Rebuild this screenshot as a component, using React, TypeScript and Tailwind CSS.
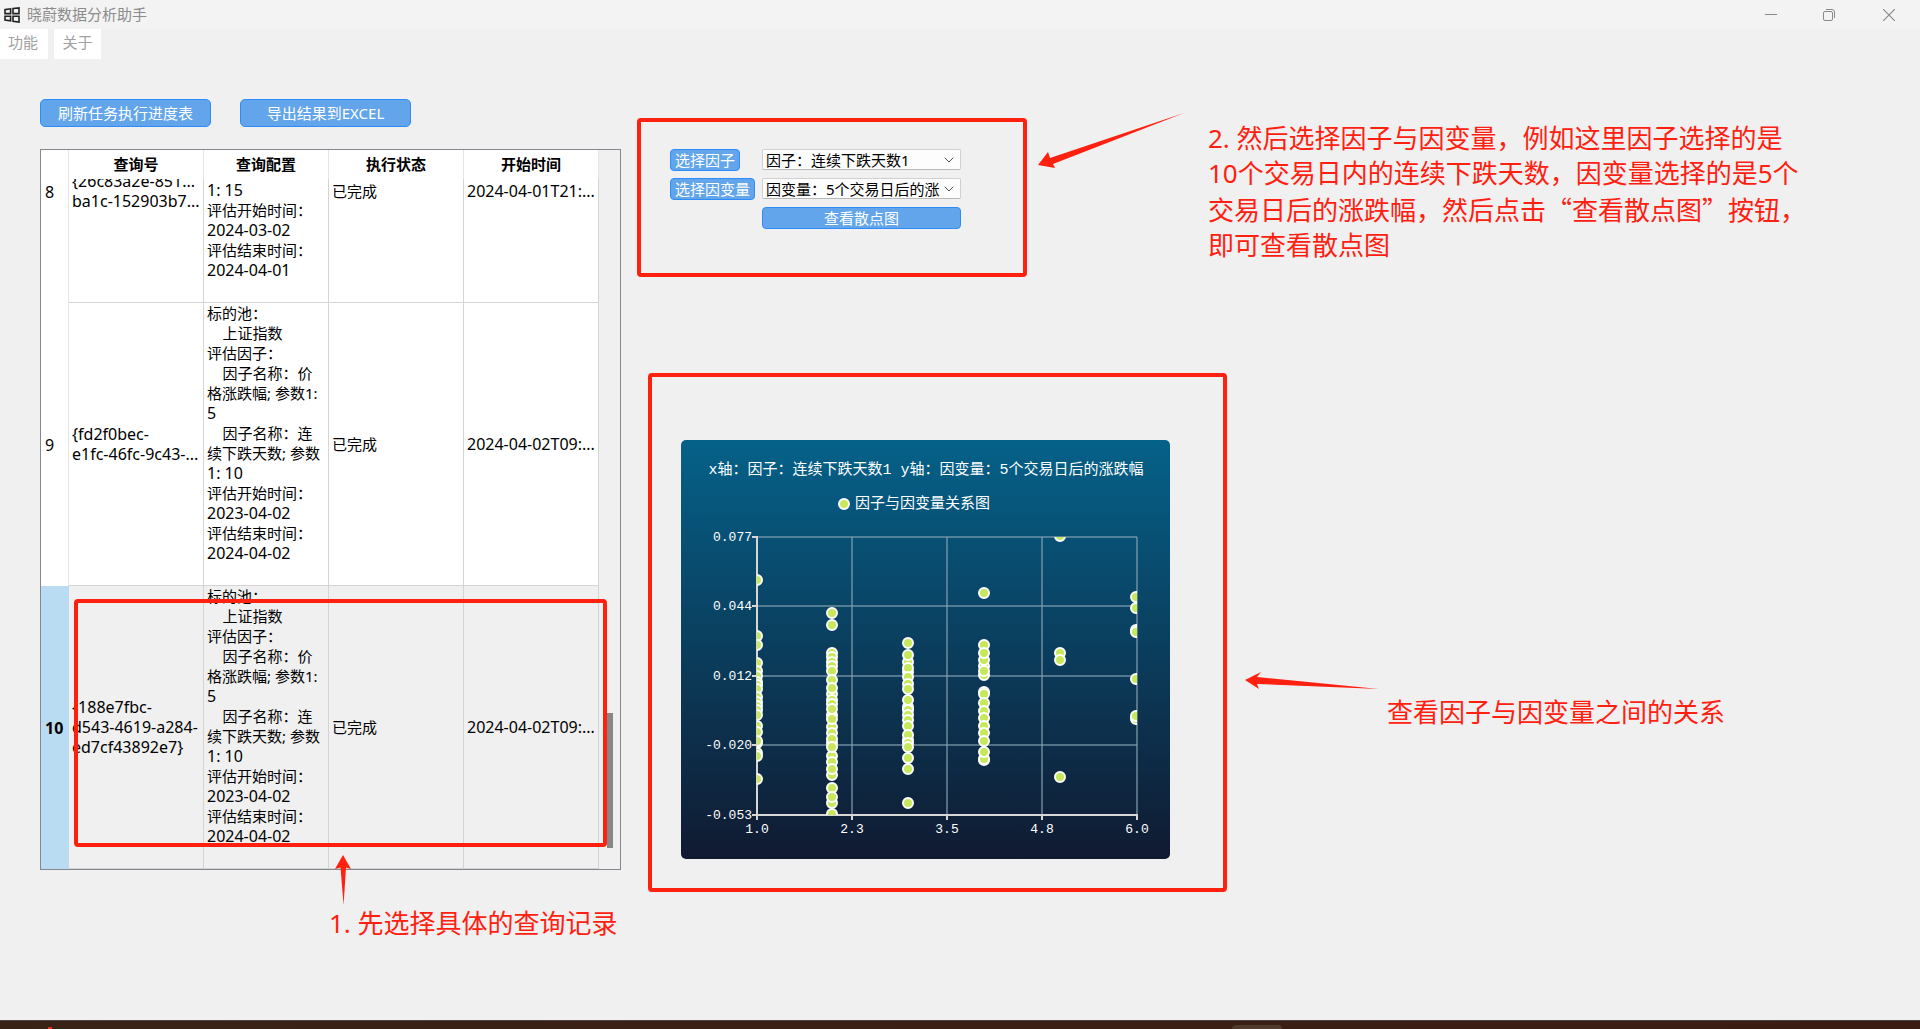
import React from 'react';
import { ChevronDown } from 'lucide-react';

interface QueryRecord {
  row: number;
  id: string[];
  config: string[];
  status: string;
  startTime: string;
}

const factorLines = [
  '标的池：',
  '    上证指数',
  '评估因子：',
  '    因子名称：价',
  '格涨跌幅; 参数1:',
  '5',
  '    因子名称：连',
  '续下跌天数; 参数',
  '1: 10',
  '评估开始时间：',
  '2023-04-02',
  '评估结束时间：',
  '2024-04-02',
  '',
];

const records: QueryRecord[] = [
  {
    row: 8,
    id: ['{26c83a2e-851...', 'ba1c-152903b7...'],
    config: [
      '',
      '',
      '',
      '',
      '',
      '1: 15',
      '评估开始时间：',
      '2024-03-02',
      '评估结束时间：',
      '2024-04-01',
      '',
    ],
    status: '已完成',
    startTime: '2024-04-01T21:...',
  },
  {
    row: 9,
    id: ['{fd2f0bec-', 'e1fc-46fc-9c43-...'],
    config: factorLines,
    status: '已完成',
    startTime: '2024-04-02T09:...',
  },
  {
    row: 10,
    id: ['{188e7fbc-', 'd543-4619-a284-', 'ed7cf43892e7}'],
    config: factorLines,
    status: '已完成',
    startTime: '2024-04-02T09:...',
  },
];

// one entry per factor value, later points are painted on top
const series: { x: number; ys: number[] }[] = [
  { x: 76, ys: [140, 196, 205, 223, 231, 236, 242, 245, 249, 257, 262, 266, 270, 275, 286, 292, 303, 301, 313, 316, 339] },
  { x: 151, ys: [173, 185, 213, 217, 222, 226, 231, 240, 254, 248, 260, 264, 275, 269, 287, 279, 293, 303, 299, 316, 307, 322, 335, 329, 348, 363, 357, 374] },
  { x: 227, ys: [203, 222, 215, 232, 228, 237, 244, 249, 267, 270, 260, 275, 280, 286, 300, 295, 303, 307, 318, 329, 363] },
  { x: 303, ys: [153, 205, 226, 220, 213, 235, 231, 252, 254, 263, 271, 278, 286, 293, 301, 320, 319, 312] },
  { x: 379, ys: [96, 213, 220, 337] },
  { x: 455, ys: [157, 168, 190, 192, 239, 279, 276] },
];

const xTicks = [
  { x: 76, label: '1.0' },
  { x: 171, label: '2.3' },
  { x: 266, label: '3.5' },
  { x: 361, label: '4.8' },
  { x: 456, label: '6.0' },
];

const yTicks = [
  { y: 97, label: '0.077' },
  { y: 166, label: '0.044' },
  { y: 236, label: '0.012' },
  { y: 305, label: '-0.020' },
  { y: 375, label: '-0.053' },
];

const blueButton = 'bg-[#62a5ea] border border-[#2d8cf9] text-white text-[15px] leading-5';
const noteText = 'text-[26px] leading-[35px] text-[#ff2010]';

const TitleBar: React.FC = () => (
  <header className="flex h-[29px] shrink-0 items-center bg-[#f3f3f3] pl-1">
    <svg width="16" height="16" viewBox="0 0 16 16" fill="none" stroke="#222" strokeWidth="1.6">
      <path d="M1 2.6 L6.6 1.8 V6.6 H1 Z" />
      <path d="M9 1.5 L15 0.9 V6.6 H9 Z" />
      <path d="M1 9.2 H6.6 V13.8 L1 13 Z" />
      <path d="M9 9.2 H15 V15 L9 14.2 Z" />
    </svg>
    <h1 className="ml-[7px] pb-0.5 text-[15px] leading-5 text-[#8c8c8c]">晓蔚数据分析助手</h1>
    <div className="ml-auto flex text-[#8a8a8a]">
      <button type="button" aria-label="最小化" className="flex w-[58px] justify-center">
        <svg width="12" height="12" viewBox="0 0 12 12" stroke="currentColor">
          <path d="M0 5.5 H12" />
        </svg>
      </button>
      <button type="button" aria-label="还原" className="flex w-[58px] justify-center">
        <svg width="12" height="12" viewBox="0 0 12 12" fill="none" stroke="currentColor">
          <rect x="0.5" y="2.5" width="9" height="9" rx="1.5" />
          <path d="M3 0.5 H9 Q11.5 0.5 11.5 3 V9" />
        </svg>
      </button>
      <button type="button" aria-label="关闭" className="flex w-[62px] justify-center">
        <svg width="12" height="12" viewBox="0 0 12 12" stroke="currentColor" strokeWidth="1.2">
          <path d="M0 0 L12 12 M12 0 L0 12" />
        </svg>
      </button>
    </div>
  </header>
);

const MenuBar: React.FC = () => (
  <nav className="flex h-[30px] shrink-0 gap-1.5 text-[15px] leading-5 text-[#a0a0a0]">
    <button type="button" className="w-12 bg-white pr-0.5 pb-1">功能</button>
    <button type="button" className="w-[47px] bg-white pb-1">关于</button>
  </nav>
);

const QueryTable: React.FC = () => (
  <div className="relative w-[581px]">
    <div className="flex h-[721px] flex-col-reverse overflow-hidden border border-[#828790]">
      <table className="w-[558px] table-fixed border-separate border-spacing-0 text-[15px] leading-5 text-black">
        <colgroup>
          <col className="w-7" />
          <col className="w-[135px]" />
          <col className="w-[125px]" />
          <col className="w-[135px]" />
          <col className="w-[135px]" />
        </colgroup>
        <thead className="sticky top-0 z-10">
          <tr className="h-[29px] bg-white">
            <td className="border-r border-[#e5e5e5]" />
            {['查询号', '查询配置', '执行状态', '开始时间'].map((name) => (
              <th key={name} scope="col" className="border-r border-[#e5e5e5] pb-0.5 font-bold">
                {name}
              </th>
            ))}
          </tr>
        </thead>
        <tbody>
          {records.map((record) => {
            const selected = record.row === 10;
            return (
              <tr key={record.row} className={selected ? 'bg-[#f0f0f0]' : 'bg-white'}>
                <th
                  scope="row"
                  className={
                    selected
                      ? 'bg-[#badcf3] pl-1 text-left text-base leading-5 font-bold'
                      : 'border-r border-[#e5e5e5] pl-1 text-left text-base leading-5 font-normal'
                  }
                >
                  {record.row}
                </th>
                <td className="border-r border-b border-[#d4d4d4] pl-[3px] text-base leading-5 whitespace-nowrap">
                  {record.id.map((line) => (
                    <div key={line}>{line}</div>
                  ))}
                </td>
                <td className="border-r border-b border-[#d4d4d4] pb-0.5 pl-[3px] whitespace-pre">
                  {record.config.map((line, index) => (
                    <div key={index} className={/^[\d:\- ]+$/.test(line) ? 'h-5 text-base leading-5' : 'h-5'}>
                      {line}
                    </div>
                  ))}
                </td>
                <td className="border-r border-b border-[#d4d4d4] pl-[3px]">{record.status}</td>
                <td className="border-r border-b border-[#d4d4d4] pl-[3px] text-base leading-5 whitespace-nowrap">
                  {record.startTime}
                </td>
              </tr>
            );
          })}
        </tbody>
      </table>
    </div>
    <div className="absolute top-[564px] left-[567px] h-[135px] w-1.5 bg-[#878787]" />
    <div className="absolute top-[450px] left-[34px] h-[248px] w-[533px] rounded border-4 border-[#ff2010]" />
    <svg className="absolute top-[706px] left-[295px]" width="16" height="50" viewBox="0 0 16 50" fill="#ff2010">
      <path d="M8 0 L16 14 L11 12.5 L8.6 50 L5.5 12.5 L0 14 Z" />
    </svg>
  </div>
);

const FactorForm: React.FC = () => (
  <form
    className="mt-[5px] h-[159px] w-[390px] shrink-0 rounded border-4 border-[#ff2010] pt-[27px] pl-[29px]"
    onSubmit={(e) => e.preventDefault()}
  >
    <div className="grid grid-cols-[85px_199px] items-start gap-[7px]">
      <label htmlFor="factor" className={`${blueButton} h-[22px] w-[70px] rounded text-center`}>
        选择因子
      </label>
      <div className="relative">
        <select
          id="factor"
          className="block h-[21px] w-full appearance-none rounded-xs border border-[#d0d0d0] border-b-[#b8b8b8] bg-[#fdfdfd] pr-5 pl-[3px] text-[15px] leading-[18px] text-black"
        >
          <option>因子：连续下跌天数1</option>
        </select>
        <ChevronDown className="pointer-events-none absolute top-[3px] right-1 text-[#505050]" size={16} strokeWidth={1.5} />
      </div>
      <label htmlFor="target" className={`${blueButton} h-[22px] w-[85px] rounded text-center`}>
        选择因变量
      </label>
      <div className="relative">
        <select
          id="target"
          className="block h-[21px] w-full appearance-none overflow-hidden rounded-xs border border-[#d0d0d0] border-b-[#b8b8b8] bg-[#fdfdfd] pr-5 pl-[3px] text-[15px] leading-[18px] text-black"
        >
          <option>因变量：5个交易日后的涨跌幅</option>
        </select>
        <ChevronDown className="pointer-events-none absolute top-[3px] right-1 text-[#505050]" size={16} strokeWidth={1.5} />
      </div>
      <button type="submit" className={`${blueButton} col-start-2 h-[22px] rounded`}>
        查看散点图
      </button>
    </div>
  </form>
);

const ScatterChart: React.FC = () => (
  <svg
    width="489"
    height="419"
    viewBox="0 0 489 419"
    className="font-['Liberation_Mono','Noto_Sans_CJK_SC',monospace]"
  >
    <defs>
      <linearGradient id="chart-bg" x1="0" y1="0" x2="0" y2="1">
        <stop offset="0" stopColor="#056189" />
        <stop offset="1" stopColor="#101a31" />
      </linearGradient>
      <clipPath id="plot-area">
        <rect x="76" y="97" width="380" height="278" />
      </clipPath>
    </defs>
    <rect width="489" height="419" rx="5" fill="url(#chart-bg)" />
    <text x="245" y="34" textAnchor="middle" fontSize="15" fill="#fff">
      x轴：因子：连续下跌天数1 y轴：因变量：5个交易日后的涨跌幅
    </text>
    <circle cx="163" cy="64" r="5" fill="#c7e85b" stroke="#fff" strokeWidth="2" />
    <text x="174" y="68" fontSize="15" fill="#fff">因子与因变量关系图</text>

    <g stroke="#84a2b0" strokeOpacity="0.6" strokeWidth="2">
      {xTicks.slice(1).map((t) => (
        <path key={t.x} d={`M${t.x} 97 V375`} />
      ))}
      {yTicks.slice(0, 4).map((t) => (
        <path key={t.y} d={`M76 ${t.y} H456`} />
      ))}
    </g>
    <g stroke="#d6d6d6" strokeWidth="2">
      <path d="M76 96 V375 M76 375 H457" />
      {xTicks.map((t) => (
        <path key={t.x} d={`M${t.x} 375 V380`} />
      ))}
      {yTicks.map((t) => (
        <path key={t.y} d={`M71 ${t.y} H76`} />
      ))}
    </g>
    <g clipPath="url(#plot-area)" fill="#c7e85b" stroke="#fff" strokeWidth="2">
      {series.map((s) => s.ys.map((y, i) => <circle key={`${s.x}-${i}`} cx={s.x} cy={y} r="5" />))}
    </g>
    <g fontSize="13" fill="#fff">
      {xTicks.map((t) => (
        <text key={t.x} x={t.x} y="393" textAnchor="middle">{t.label}</text>
      ))}
      {yTicks.map((t) => (
        <text key={t.y} x="71" y={t.y + 4} textAnchor="end">{t.label}</text>
      ))}
    </g>
  </svg>
);

const App: React.FC = () => {
  return (
    <div className="flex min-h-screen flex-col overflow-hidden bg-[#f0f0f0] font-['Noto_Sans','Noto_Sans_CJK_SC',sans-serif]">
      <TitleBar />
      <MenuBar />
      <main className="flex flex-1 items-start">
        <section className="shrink-0 pt-10 pl-10">
          <div className="flex gap-[29px]">
            <button type="button" className={`${blueButton} h-7 w-[171px] rounded-[5px]`}>
              刷新任务执行进度表
            </button>
            <button type="button" className={`${blueButton} h-7 w-[171px] rounded-[5px]`}>
              导出结果到EXCEL
            </button>
          </div>
          <div className="mt-[22px]">
            <QueryTable />
          </div>
          <p className={`${noteText} mt-9 pl-[289px]`}>1. 先选择具体的查询记录</p>
        </section>

        <section className="flex-1 pt-[54px] whitespace-nowrap">
          <div className="flex items-start pl-4">
            <FactorForm />
            <svg className="ml-[11px] shrink-0" width="146" height="56" viewBox="0 0 146 56" fill="#ff2010">
              <path d="M0 52 L10 39 L12 45 L146 0 L15 51 L17 55 Z" />
            </svg>
            <p className={`${noteText} mt-2 ml-6`}>
              2. 然后选择因子与因变量，例如这里因子选择的是
              <br />
              10个交易日内的连续下跌天数，因变量选择的是5个
              <br />
              <span className="font-['Noto_Sans_CJK_SC',sans-serif]">
                交易日后的涨跌幅，然后点击“查看散点图”按钮，
              </span>
              <br />
              即可查看散点图
            </p>
          </div>
          <div className="mt-24 flex items-center pl-[27px]">
            <div className="h-[519px] w-[579px] shrink-0 rounded border-4 border-[#ff2010] pt-[63px] pl-[29px]">
              <ScatterChart />
            </div>
            <svg className="mt-[97px] ml-[18px] shrink-0" width="134" height="18" viewBox="0 0 134 18" fill="#ff2010">
              <path d="M0 8 L16 0 L12 5 L134 17 L12 12 L14 17 Z" />
            </svg>
            <p className={`${noteText} mt-[160px] ml-2`}>查看因子与因变量之间的关系</p>
          </div>
        </section>
      </main>
      <footer className="flex h-[9px] shrink-0 items-end border-t border-[#4a4540] bg-linear-to-r from-[#382216] via-[#3b1f14] to-[#3b1c12]">
        <span className="ml-12 h-0.5 w-1 bg-[#e03020]" />
        <span className="ml-[1180px] h-1 w-[50px] rounded-t bg-[#503a2c]" />
      </footer>
    </div>
  );
};

export default App;
